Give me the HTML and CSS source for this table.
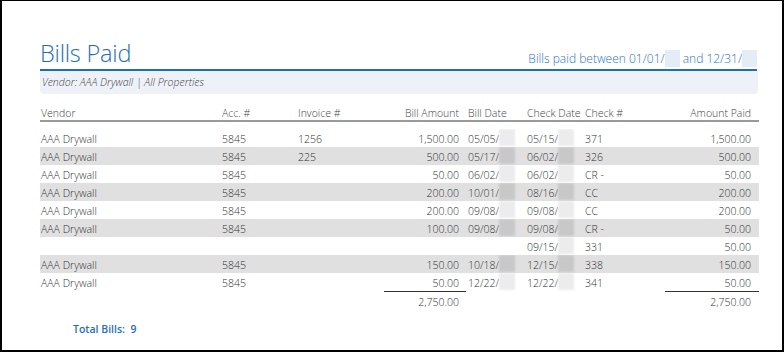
FILE: index.html
```html
<!DOCTYPE html>
<html>
<head>
<meta charset="utf-8">
<link rel="stylesheet" href="styles.css">
</head>
<body>
<div class="page">
  <header class="report-head">
    <h1 class="title">Bills Paid</h1>
    <div class="range">Bills paid between 01/01/<span class="blur-h"></span> and 12/31/<span class="blur-h"></span></div>
  </header>
  <div class="filter">Vendor: AAA Drywall | All Properties</div>

  <div class="table">
    <div class="row head">
      <div class="c">Vendor</div><div class="c">Acc. #</div><div class="c">Invoice #</div><div class="c num">Bill Amount</div><div class="c">Bill Date</div><div class="c">Check Date</div><div class="c">Check #</div><div class="c num last">Amount Paid</div>
    </div>
    <div class="body">
      <div class="row">
        <div class="c">AAA Drywall</div><div class="c">5845</div><div class="c">1256</div><div class="c num">1,500.00</div><div class="c">05/05/<span class="blur"></span></div><div class="c">05/15/<span class="blur"></span></div><div class="c">371</div><div class="c num last">1,500.00</div>
      </div>
      <div class="row alt">
        <div class="c">AAA Drywall</div><div class="c">5845</div><div class="c">225</div><div class="c num">500.00</div><div class="c">05/17/<span class="blur"></span></div><div class="c">06/02/<span class="blur"></span></div><div class="c">326</div><div class="c num last">500.00</div>
      </div>
      <div class="row">
        <div class="c">AAA Drywall</div><div class="c">5845</div><div class="c"></div><div class="c num">50.00</div><div class="c">06/02/<span class="blur"></span></div><div class="c">06/02/<span class="blur"></span></div><div class="c">CR -</div><div class="c num last">50.00</div>
      </div>
      <div class="row alt">
        <div class="c">AAA Drywall</div><div class="c">5845</div><div class="c"></div><div class="c num">200.00</div><div class="c">10/01/<span class="blur"></span></div><div class="c">08/16/<span class="blur"></span></div><div class="c">CC</div><div class="c num last">200.00</div>
      </div>
      <div class="row">
        <div class="c">AAA Drywall</div><div class="c">5845</div><div class="c"></div><div class="c num">200.00</div><div class="c">09/08/<span class="blur"></span></div><div class="c">09/08/<span class="blur"></span></div><div class="c">CC</div><div class="c num last">200.00</div>
      </div>
      <div class="row alt">
        <div class="c">AAA Drywall</div><div class="c">5845</div><div class="c"></div><div class="c num">100.00</div><div class="c">09/08/<span class="blur"></span></div><div class="c">09/08/<span class="blur"></span></div><div class="c">CR -</div><div class="c num last">50.00</div>
      </div>
      <div class="row">
        <div class="c"></div><div class="c"></div><div class="c"></div><div class="c num"></div><div class="c"></div><div class="c">09/15/<span class="blur"></span></div><div class="c">331</div><div class="c num last">50.00</div>
      </div>
      <div class="row alt">
        <div class="c">AAA Drywall</div><div class="c">5845</div><div class="c"></div><div class="c num">150.00</div><div class="c">10/18/<span class="blur"></span></div><div class="c">12/15/<span class="blur"></span></div><div class="c">338</div><div class="c num last">150.00</div>
      </div>
      <div class="row">
        <div class="c">AAA Drywall</div><div class="c">5845</div><div class="c"></div><div class="c num">50.00</div><div class="c">12/22/<span class="blur"></span></div><div class="c">12/22/<span class="blur"></span></div><div class="c">341</div><div class="c num last">50.00</div>
      </div>
      <div class="row total">
        <div class="c"></div><div class="c"></div><div class="c"></div><div class="c num sum">2,750.00</div><div class="c"></div><div class="c"></div><div class="c"></div><div class="c num last sum">2,750.00</div>
      </div>
    </div>
  </div>

  <div class="total-bills">Total Bills:&nbsp; 9</div>
</div>
</body>
</html>
```

FILE: styles.css
```css
* { box-sizing: border-box; }

html, body {
  margin: 0;
  padding: 0;
  background: #fff;
}

body {
  font-family: "Open Sans", "Noto Sans", sans-serif;
  color: #555;
}

.page {
  width: 784px;
  height: 352px;
  border: solid #000;
  border-width: 1px 2px 2px 2px;
  padding: 38px 23px 0 38px;
  overflow: hidden;
}

.report-head {
  display: flex;
  justify-content: space-between;
  align-items: flex-end;
  margin-right: 2px;
  padding-bottom: 2px;
  border-bottom: 2px solid #1f6ebe;
}

.title {
  margin: 0;
  font-size: 23.5px;
  line-height: 28px;
  font-weight: 300;
  color: #1f6ebe;
  letter-spacing: -0.2px;
}

.range {
  font-size: 12px;
  line-height: 17px;
  font-weight: 300;
  color: #2b74c4;
  white-space: nowrap;
}

.blur-h {
  display: inline-block;
  width: 15px;
  height: 17px;
  vertical-align: top;
  background: #e4ecf5;
}

.filter {
  height: 23px;
  line-height: 23px;
  margin-right: 1px;
  padding-left: 2px;
  background: #eef2f8;
  border-radius: 0 0 4px 4px;
  font-size: 10.5px;
  font-style: italic;
  font-weight: 300;
  color: #444;
}

.table {
  margin-top: 10px;
  font-size: 10.5px;
  font-weight: 300;
  color: #333;
}

.row {
  display: grid;
  grid-template-columns: 181px 76px 87px 82px 60px 58px 81px 94px;
  height: 18px;
  line-height: 18px;
  white-space: nowrap;
}

.row.head {
  height: 18px;
  line-height: 16px;
  border-bottom: 2px solid #9a9a9a;
  color: #444;
}

.body {
  padding-top: 7px;
}

.row.alt {
  background: #e0e0e0;
}

.c {
  padding-left: 1px;
  padding-top: 1px;
  overflow: hidden;
}

.c:nth-child(5) { padding-left: 2px; }

.c.num {
  text-align: right;
  padding-left: 0;
  padding-right: 7px;
}

.c.last {
  padding-right: 8px;
}

.blur {
  display: inline-block;
  width: 16px;
  height: 17px;
  vertical-align: top;
  margin-top: -1px;
  background: #ececec;
  filter: blur(1px);
}

.row.alt .blur {
  background: #c8c8c8;
}

.row.total {
  height: 20px;
  line-height: 20px;
}

.c.sum {
  border-top: 1.5px solid #333;
  padding-top: 0;
}

.total-bills {
  margin: 10px 0 0 33px;
  font-size: 10.5px;
  line-height: 16px;
  font-weight: 600;
  color: #1f6ebe;
}
```
